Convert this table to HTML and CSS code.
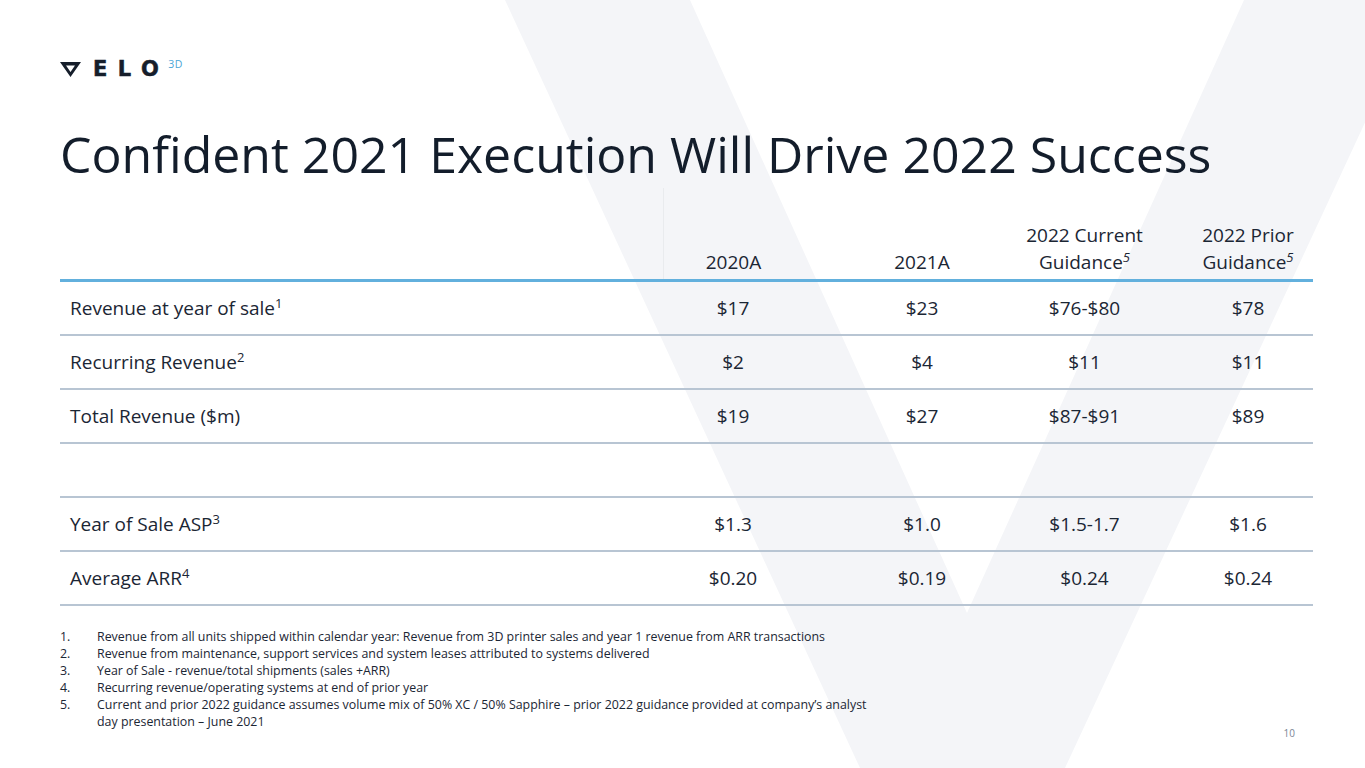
FILE: index.html
```html
<!DOCTYPE html>
<html lang="en">
<head>
<meta charset="utf-8">
<title>Confident 2021 Execution Will Drive 2022 Success</title>
<link rel="stylesheet" href="styles.css">
</head>
<body>
<div class="slide">
  <div class="logo">
    <svg class="logo-mark" width="21" height="15" viewBox="0 0 21 15"><path fill-rule="evenodd" fill="#161e2b" d="M0 0H21L10.5 15Z M6 3.6H15L10.5 9.9Z"/></svg>
    <span class="logo-word">ELO</span>
    <span class="logo-3d">3D</span>
  </div>

  <h1 class="title">Confident 2021 Execution Will Drive 2022 Success</h1>

  <div class="table">
    <div class="thead">
      <div class="th th-label"></div>
      <div class="th th-first">2020A</div>
      <div class="th col2">2021A</div>
      <div class="th">2022 Current<br>Guidance<sup class="sup it">5</sup></div>
      <div class="th col4">2022 Prior<br>Guidance<sup class="sup it">5</sup></div>
    </div>
    <div class="row">
      <div class="label">Revenue at year of sale<sup class="sup">1</sup></div>
      <div class="val">$17</div>
      <div class="val col2">$23</div>
      <div class="val">$76-$80</div>
      <div class="val col4">$78</div>
    </div>
    <div class="row">
      <div class="label">Recurring Revenue<sup class="sup">2</sup></div>
      <div class="val">$2</div>
      <div class="val col2">$4</div>
      <div class="val">$11</div>
      <div class="val col4">$11</div>
    </div>
    <div class="row">
      <div class="label">Total Revenue ($m)</div>
      <div class="val">$19</div>
      <div class="val col2">$27</div>
      <div class="val">$87-$91</div>
      <div class="val col4">$89</div>
    </div>
    <div class="row">
      <div class="label"></div>
      <div class="val"></div>
      <div class="val col2"></div>
      <div class="val"></div>
      <div class="val col4"></div>
    </div>
    <div class="row">
      <div class="label">Year of Sale ASP<sup class="sup">3</sup></div>
      <div class="val">$1.3</div>
      <div class="val col2">$1.0</div>
      <div class="val">$1.5-1.7</div>
      <div class="val col4">$1.6</div>
    </div>
    <div class="row">
      <div class="label">Average ARR<sup class="sup">4</sup></div>
      <div class="val">$0.20</div>
      <div class="val col2">$0.19</div>
      <div class="val">$0.24</div>
      <div class="val col4">$0.24</div>
    </div>
  </div>

  <div class="footer">
    <div class="notes">
      <div class="note"><span class="num">1.</span><span>Revenue from all units shipped within calendar year: Revenue from 3D printer sales and year 1 revenue from ARR transactions</span></div>
      <div class="note"><span class="num">2.</span><span>Revenue from maintenance, support services and system leases attributed to systems delivered</span></div>
      <div class="note"><span class="num">3.</span><span>Year of Sale - revenue/total shipments (sales +ARR)</span></div>
      <div class="note"><span class="num">4.</span><span>Recurring revenue/operating systems at end of prior year</span></div>
      <div class="note"><span class="num">5.</span><span>Current and prior 2022 guidance assumes volume mix of 50% XC / 50% Sapphire – prior 2022 guidance provided at company’s analyst<br>day presentation – June 2021</span></div>
    </div>
    <div class="page-num">10</div>
  </div>
</div>
</body>
</html>
```

FILE: styles.css
```css
html, body {
  margin: 0;
  padding: 0;
}

body {
  width: 1365px;
  height: 768px;
  overflow: hidden;
  font-family: "Open Sans", "Noto Sans", sans-serif;
  color: #1b2634;
  background: #ffffff url("data:image/svg+xml,%3Csvg xmlns='http://www.w3.org/2000/svg' width='1365' height='768'%3E%3Cpath fill='%23f4f5f8' fill-rule='evenodd' d='M505 0H1422L1065 768H860Z M690 0L967 613L1244 0Z'/%3E%3C/svg%3E") no-repeat 0 0;
}

.slide {
  box-sizing: border-box;
  height: 768px;
  padding: 60px 52px 0 60px;
  display: flex;
  flex-direction: column;
}

/* Logo */
.logo {
  display: flex;
  align-items: flex-start;
  height: 20px;
}

.logo-mark {
  margin-top: 1.5px;
  flex: none;
}

.logo-word {
  margin-left: 12px;
  font-family: "DejaVu Sans", sans-serif;
  font-weight: 700;
  font-size: 21px;
  line-height: 20px;
  letter-spacing: 10.5px;
  color: #161e2b;
  -webkit-text-stroke: 0.5px #161e2b;
  margin-top: -1px;
}

.logo-3d {
  margin-left: -1px;
  font-family: "Open Sans", sans-serif;
  font-size: 10.5px;
  line-height: 10px;
  letter-spacing: 0.5px;
  color: #4aa6d6;
  margin-top: -1px;
}

/* Title */
.title {
  margin: 44px 0 0;
  font-size: 50px;
  line-height: 60px;
  font-weight: 400;
  color: #131d2b;
  white-space: nowrap;
}

/* Table */
.table {
  margin-top: 4px;
  width: 1253px;
  font-size: 19px;
}

.thead,
.row {
  display: grid;
  grid-template-columns: 603px 140px 200px 163px 147px;
}

.thead {
  height: 91px;
  border-bottom: 3px solid #62b0dd;
  align-items: end;
}

.th {
  text-align: center;
  line-height: 27px;
  padding-bottom: 3px;
}

.th-first {
  align-self: stretch;
  display: flex;
  flex-direction: column;
  justify-content: flex-end;
  border-left: 1px solid #e9ebee;
}

.row {
  height: 52px;
  border-bottom: 2px solid #b8c5d3;
  align-items: center;
}

.label {
  padding-left: 10px;
  white-space: nowrap;
}

.val {
  text-align: center;
  white-space: nowrap;
}

.col2 {
  padding-left: 38px;
}

.col4 {
  padding-left: 17px;
}

.sup {
  font-size: 13px;
  line-height: 0;
  vertical-align: 7px;
}

.it {
  font-style: italic;
}

/* Footer */
.footer {
  margin-top: 22px;
  display: flex;
  justify-content: space-between;
  align-items: flex-end;
}

.notes {
  font-size: 12.4px;
  line-height: 17px;
  color: #1b2634;
}

.note {
  display: flex;
  white-space: nowrap;
}

.num {
  width: 37px;
  flex: none;
}

.page-num {
  font-size: 10px;
  line-height: 12px;
  color: #7b8694;
  margin-right: 18px;
  margin-bottom: -9px;
}
```
